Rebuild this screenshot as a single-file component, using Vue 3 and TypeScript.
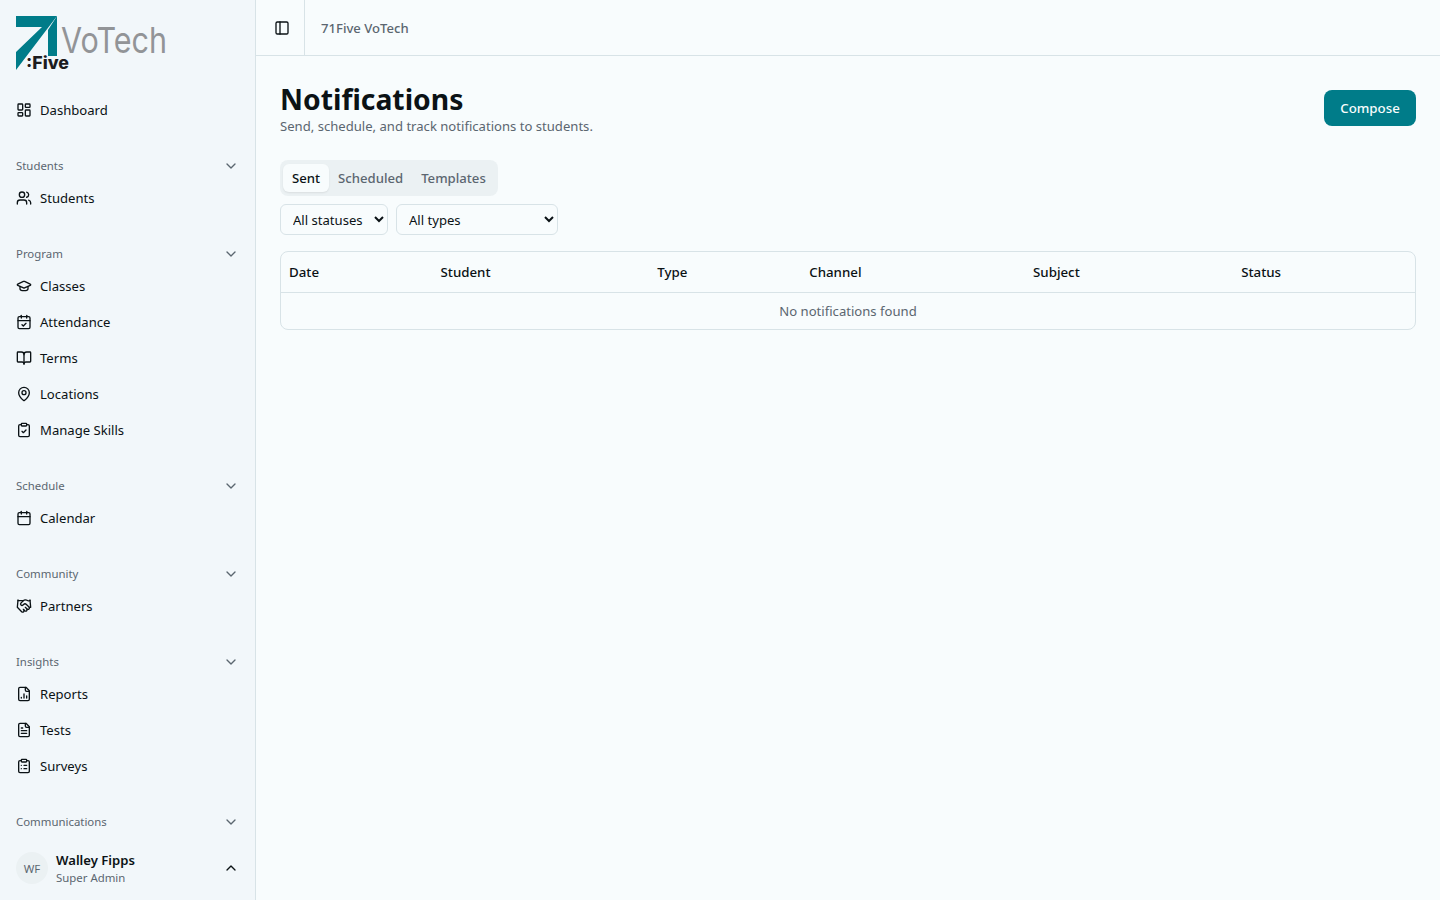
<template>
  <div class="layout">
    <aside class="sidebar">
      <div class="logo">
        <svg width="160" height="60" viewBox="0 0 160 60">
          <polygon points="0,0 41,0 0,54 0,36 26,11 0,11" class="mark" />
          <polygon points="41,0 41,40 32,40 32,14" class="mark" />
          <text x="45" y="37" class="logo-name" textLength="106" lengthAdjust="spacingAndGlyphs">VoTech</text>
          <text x="10" y="53" class="logo-five" textLength="43" lengthAdjust="spacingAndGlyphs">:Five</text>
        </svg>
      </div>
      <nav class="nav">
        <a class="nav-item">
          <svg class="icon" viewBox="0 0 24 24" v-html="icons.dashboard"></svg>
          <span>Dashboard</span>
        </a>
        <section v-for="group in groups" :key="group.label" class="group">
          <div class="group-label">
            <span>{{ group.label }}</span>
            <svg class="icon chev" viewBox="0 0 24 24"><path d="m6 9 6 6 6-6" /></svg>
          </div>
          <a v-for="item in group.items" :key="item.label" class="nav-item">
            <svg class="icon" viewBox="0 0 24 24" v-html="icons[item.icon]"></svg>
            <span>{{ item.label }}</span>
          </a>
        </section>
      </nav>
      <div class="user">
        <div class="avatar">WF</div>
        <div class="user-text">
          <div class="user-name">Walley Fipps</div>
          <div class="user-role">Super Admin</div>
        </div>
        <svg class="icon chev-up" viewBox="0 0 24 24"><path d="m18 15-6-6-6 6" /></svg>
      </div>
    </aside>

    <div class="main">
      <header class="topbar">
        <button class="toggle">
          <svg class="icon" viewBox="0 0 24 24" v-html="icons.panel"></svg>
        </button>
        <span class="crumb">71Five VoTech</span>
      </header>

      <main class="content">
        <div class="head">
          <div>
            <h1>Notifications</h1>
            <p>Send, schedule, and track notifications to students.</p>
          </div>
          <button class="compose">Compose</button>
        </div>

        <div class="tabs">
          <button
            v-for="tab in tabs"
            :key="tab"
            :class="['tab', { active: activeTab === tab }]"
            @click="activeTab = tab"
          >{{ tab }}</button>
        </div>

        <div class="filters">
          <select class="status-select">
            <option>All statuses</option>
          </select>
          <select class="type-select">
            <option>All types</option>
          </select>
        </div>

        <div class="table-wrap">
          <table>
            <colgroup>
              <col v-for="c in columns" :key="c.name" :style="{ width: c.width + 'px' }" />
            </colgroup>
            <thead>
              <tr>
                <th v-for="c in columns" :key="c.name">{{ c.name }}</th>
              </tr>
            </thead>
            <tbody>
              <tr>
                <td :colspan="columns.length">No notifications found</td>
              </tr>
            </tbody>
          </table>
        </div>
      </main>
    </div>
  </div>
</template>

<script setup lang="ts">
import { ref } from 'vue';

const clipRect = '<rect x="8" y="2" width="8" height="4" rx="1"/><path d="M16 4h2a2 2 0 0 1 2 2v14a2 2 0 0 1-2 2H6a2 2 0 0 1-2-2V6a2 2 0 0 1 2-2h2"/>';
const fileBase = '<path d="M15 2H6a2 2 0 0 0-2 2v16a2 2 0 0 0 2 2h12a2 2 0 0 0 2-2V7Z"/><path d="M14 2v4a2 2 0 0 0 2 2h4"/>';
const calBase = '<path d="M8 2v4"/><path d="M16 2v4"/><rect x="3" y="4" width="18" height="18" rx="2"/><path d="M3 10h18"/>';

const icons: Record<string, string> = {
  dashboard: '<rect x="3" y="3" width="7" height="9" rx="1"/><rect x="14" y="3" width="7" height="5" rx="1"/><rect x="14" y="12" width="7" height="9" rx="1"/><rect x="3" y="16" width="7" height="5" rx="1"/>',
  users: '<path d="M16 21v-2a4 4 0 0 0-4-4H6a4 4 0 0 0-4 4v2"/><circle cx="9" cy="7" r="4"/><path d="M22 21v-2a4 4 0 0 0-3-3.87"/><path d="M16 3.13a4 4 0 0 1 0 7.75"/>',
  cap: '<path d="M21.42 10.922a1 1 0 0 0-.019-1.838L12.83 5.18a2 2 0 0 0-1.66 0L2.6 9.08a1 1 0 0 0 0 1.832l8.57 3.908a2 2 0 0 0 1.66 0z"/><path d="M6 12.5V16a6 3 0 0 0 12 0v-3.5"/>',
  calendarCheck: calBase + '<path d="m9 16 2 2 4-4"/>',
  book: '<path d="M12 7v14"/><path d="M3 18a1 1 0 0 1-1-1V4a1 1 0 0 1 1-1h5a4 4 0 0 1 4 4 4 4 0 0 1 4-4h5a1 1 0 0 1 1 1v13a1 1 0 0 1-1 1h-6a3 3 0 0 0-3 3 3 3 0 0 0-3-3z"/>',
  pin: '<path d="M20 10c0 4.993-5.539 10.193-7.399 11.799a1 1 0 0 1-1.202 0C9.539 20.193 4 14.993 4 10a8 8 0 0 1 16 0"/><circle cx="12" cy="10" r="3"/>',
  clipCheck: clipRect + '<path d="m9 14 2 2 4-4"/>',
  calendar: calBase,
  handshake: '<path d="m11 17 2 2a1 1 0 1 0 3-3"/><path d="m14 14 2.5 2.5a1 1 0 1 0 3-3l-3.88-3.88a3 3 0 0 0-4.24 0l-.88.88a1 1 0 1 1-3-3l2.81-2.81a5.79 5.79 0 0 1 7.06-.87l.47.28a2 2 0 0 0 1.42.25L21 4"/><path d="m21 3 1 11h-2"/><path d="M3 3 2 14l6.5 6.5a1 1 0 1 0 3-3"/><path d="M3 4h8"/>',
  fileChart: fileBase + '<path d="M8 18v-1"/><path d="M12 18v-6"/><path d="M16 18v-3"/>',
  fileText: fileBase + '<path d="M10 9H8"/><path d="M16 13H8"/><path d="M16 17H8"/>',
  clipList: clipRect + '<path d="M12 11h4"/><path d="M12 16h4"/><path d="M8 11h.01"/><path d="M8 16h.01"/>',
  panel: '<rect x="3" y="3" width="18" height="18" rx="2"/><path d="M9 3v18"/>',
};

const groups = [
  { label: 'Students', items: [{ label: 'Students', icon: 'users' }] },
  {
    label: 'Program',
    items: [
      { label: 'Classes', icon: 'cap' },
      { label: 'Attendance', icon: 'calendarCheck' },
      { label: 'Terms', icon: 'book' },
      { label: 'Locations', icon: 'pin' },
      { label: 'Manage Skills', icon: 'clipCheck' },
    ],
  },
  { label: 'Schedule', items: [{ label: 'Calendar', icon: 'calendar' }] },
  { label: 'Community', items: [{ label: 'Partners', icon: 'handshake' }] },
  {
    label: 'Insights',
    items: [
      { label: 'Reports', icon: 'fileChart' },
      { label: 'Tests', icon: 'fileText' },
      { label: 'Surveys', icon: 'clipList' },
    ],
  },
  { label: 'Communications', items: [] },
];

const tabs = ['Sent', 'Scheduled', 'Templates'];
const activeTab = ref('Sent');

const columns = [
  { name: 'Date', width: 151.5 },
  { name: 'Student', width: 216.7 },
  { name: 'Type', width: 152 },
  { name: 'Channel', width: 223.8 },
  { name: 'Subject', width: 208.2 },
  { name: 'Status', width: 181.8 },
];
</script>

<style>
html,
body {
  margin: 0;
  background: #f8fcfd;
}
</style>

<style scoped>
.layout {
  display: flex;
  height: 100vh;
  overflow: hidden;
  font-family: "Noto Sans", sans-serif;
  color: #0b1215;
  font-size: 13.1px;
}

.icon {
  width: 16px;
  height: 16px;
  flex: none;
  fill: none;
  stroke: currentColor;
  stroke-width: 2;
  stroke-linecap: round;
  stroke-linejoin: round;
}

.sidebar {
  width: 256px;
  flex: none;
  box-sizing: border-box;
  border-right: 1px solid #d8e3e7;
  background: #f2f7fa;
  display: flex;
  flex-direction: column;
}

.logo {
  height: 92px;
  box-sizing: border-box;
  padding: 16px 0 0 16px;
  flex: none;
}

.logo svg {
  display: block;
  overflow: visible;
}

.mark {
  fill: #007c89;
}

.logo-name {
  font-family: "Inter", sans-serif;
  font-size: 36px;
  font-weight: 400;
  fill: #929497;
}

.logo-five {
  font-family: "Inter", sans-serif;
  font-size: 17px;
  font-weight: 800;
  fill: #1c1c1e;
}

.nav {
  flex: 1;
  min-height: 0;
  overflow: hidden;
}

.nav-item {
  height: 36px;
  display: flex;
  align-items: center;
  gap: 8px;
  padding: 0 16px;
  color: #0b1215;
}

.group {
  margin-top: 24px;
}

.group-label {
  height: 28px;
  display: flex;
  align-items: center;
  justify-content: space-between;
  padding: 0 16px;
  font-size: 11.4px;
  color: #5b6670;
}

.group-label span {
  margin-bottom: 2px;
}

.chev {
  color: #5b6670;
}

.user {
  flex: none;
  height: 64px;
  box-sizing: border-box;
  display: flex;
  align-items: center;
  gap: 8px;
  padding: 0 16px;
}

.avatar {
  width: 32px;
  height: 32px;
  border-radius: 50%;
  background: #ebf1f3;
  color: #5b6670;
  font-size: 11.4px;
  display: flex;
  align-items: center;
  justify-content: center;
}

.user-text {
  flex: 1;
  line-height: 18px;
  margin-top: 2px;
}

.user-name {
  font-weight: 600;
  font-size: 13.1px;
}

.user-role {
  font-size: 11.4px;
  color: #5b6670;
}

.main {
  flex: 1;
  min-width: 0;
  display: flex;
  flex-direction: column;
}

.topbar {
  height: 56px;
  box-sizing: border-box;
  border-bottom: 1px solid #d8e3e7;
  display: flex;
  align-items: center;
  flex: none;
}

.toggle {
  width: 49px;
  height: 55px;
  box-sizing: border-box;
  border: 0;
  border-right: 1px solid #d8e3e7;
  background: none;
  color: #0b1215;
  padding: 0 0 0 18px;
  display: flex;
  align-items: center;
}

.crumb {
  margin-left: 16px;
  font-weight: 500;
  color: #5b6670;
}

.content {
  padding: 24px;
}

.head {
  display: flex;
  justify-content: space-between;
  align-items: center;
  height: 56px;
}

h1 {
  margin: 0;
  font-size: 28.3px;
  line-height: 38px;
  font-weight: 700;
}

.head p {
  margin: 0 0 2px;
  color: #5b6670;
  line-height: 16px;
}

.compose {
  width: 92px;
  height: 36px;
  border: 0;
  border-radius: 8px;
  background: #007c89;
  color: #f8fcfd;
  font: 500 13.3px "Noto Sans", sans-serif;
}

.tabs {
  display: inline-flex;
  margin-top: 24px;
  padding: 4px 3px;
  height: 36px;
  box-sizing: border-box;
  border-radius: 8px;
  background: #ebf1f3;
  vertical-align: top;
}

.tab {
  border: 0;
  background: none;
  font: 500 13.15px "Noto Sans", sans-serif;
  color: #5b6670;
  padding: 0 9px;
  border-radius: 6px;
}

.tab.active {
  background: #f8fcfd;
  color: #0b1215;
  box-shadow: 0 1px 2px rgba(0, 0, 0, 0.08);
}

.filters {
  display: flex;
  gap: 8px;
  margin-top: 8px;
}

select {
  height: 31px;
  box-sizing: border-box;
  border: 1px solid #d8e3e7;
  border-radius: 6px;
  background: #f8fcfd;
  color: #0b1215;
  font: 13.1px "Noto Sans", sans-serif;
  padding: 0 0 0 8px;
}

.status-select {
  width: 108px;
}

.type-select {
  width: 162px;
}

.table-wrap {
  margin-top: 16px;
  border: 1px solid #d8e3e7;
  border-radius: 8px;
  overflow: hidden;
}

table {
  width: 100%;
  border-collapse: collapse;
  table-layout: fixed;
}

th {
  height: 40px;
  padding: 0 8px;
  text-align: left;
  font-size: 13.3px;
  font-weight: 500;
  border-bottom: 1px solid #d8e3e7;
}

td {
  height: 36px;
  padding: 0;
  text-align: center;
  color: #5b6670;
}
</style>
